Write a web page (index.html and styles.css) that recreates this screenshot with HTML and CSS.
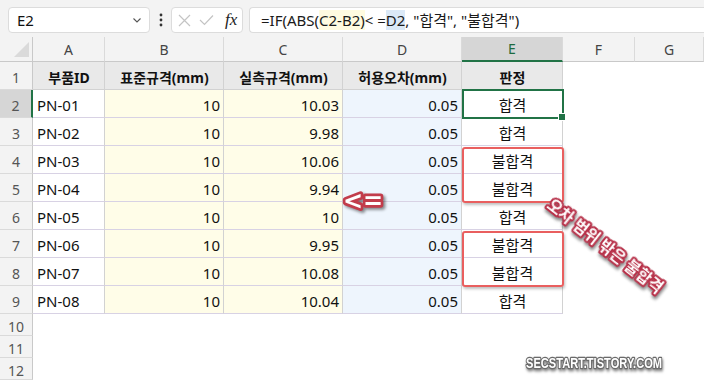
FILE: index.html
```html
<!DOCTYPE html>
<html lang="ko">

<head>
  <meta charset="UTF-8">
  <title>판정 수식</title>
  <link rel="stylesheet" href="styles.css">
</head>

<body>
  <div class="toolbar">
    <div class="namebox">
      <span>E2</span>
      <svg class="chev" width="8" height="5" viewBox="0 0 8 5"><path d="M0.5 0.5 L4 4 L7.5 0.5" fill="none" stroke="#555" stroke-width="1.1"/></svg>
    </div>
    <svg class="dots" width="4" height="14" viewBox="0 0 4 14"><circle cx="2" cy="2" r="1.4" fill="#333"/><circle cx="2" cy="7" r="1.4" fill="#333"/><circle cx="2" cy="12" r="1.4" fill="#333"/></svg>
    <div class="fxbox">
      <svg width="13" height="13" viewBox="0 0 13 13"><path d="M1 1 L12 12 M12 1 L1 12" stroke="#c4c4c4" stroke-width="1.2"/></svg>
      <svg width="15" height="12" viewBox="0 0 15 12"><path d="M1 6 L5.5 10.5 L14 1.5" fill="none" stroke="#c4c4c4" stroke-width="1.2"/></svg>
      <i class="fx">fx</i>
    </div>
    <div class="formula">=IF(ABS(<span class="ref-y">C2-B2)</span>&lt; =<span class="ref-b">D2</span>, "합격", "불합격")</div>
  </div>

  <div class="sheet">
    <div class="grid">
      <div class="corner"><span class="tri"></span></div>
      <div class="colhead">A</div>
      <div class="colhead">B</div>
      <div class="colhead">C</div>
      <div class="colhead">D</div>
      <div class="colhead sel">E</div>
      <div class="colhead">F</div>
      <div class="colhead">G</div>

      <div class="rowhead">1</div>
      <div class="cell th">부품ID</div>
      <div class="cell th">표준규격(mm)</div>
      <div class="cell th">실측규격(mm)</div>
      <div class="cell th">허용오차(mm)</div>
      <div class="cell th">판정</div>
      <div class="blank"></div>
      <div class="blank"></div>

      <div class="rowhead sel">2</div>
      <div class="cell a">PN-01</div>
      <div class="cell b">10</div>
      <div class="cell c">10.03</div>
      <div class="cell d">0.05</div>
      <div class="cell e">합격</div>
      <div class="blank"></div>
      <div class="blank"></div>

      <div class="rowhead">3</div>
      <div class="cell a">PN-02</div>
      <div class="cell b">10</div>
      <div class="cell c">9.98</div>
      <div class="cell d">0.05</div>
      <div class="cell e">합격</div>
      <div class="blank"></div>
      <div class="blank"></div>

      <div class="rowhead">4</div>
      <div class="cell a">PN-03</div>
      <div class="cell b">10</div>
      <div class="cell c">10.06</div>
      <div class="cell d">0.05</div>
      <div class="cell e">불합격</div>
      <div class="blank"></div>
      <div class="blank"></div>

      <div class="rowhead">5</div>
      <div class="cell a">PN-04</div>
      <div class="cell b">10</div>
      <div class="cell c">9.94</div>
      <div class="cell d">0.05</div>
      <div class="cell e">불합격</div>
      <div class="blank"></div>
      <div class="blank"></div>

      <div class="rowhead">6</div>
      <div class="cell a">PN-05</div>
      <div class="cell b">10</div>
      <div class="cell c">10</div>
      <div class="cell d">0.05</div>
      <div class="cell e">합격</div>
      <div class="blank"></div>
      <div class="blank"></div>

      <div class="rowhead">7</div>
      <div class="cell a">PN-06</div>
      <div class="cell b">10</div>
      <div class="cell c">9.95</div>
      <div class="cell d">0.05</div>
      <div class="cell e">불합격</div>
      <div class="blank"></div>
      <div class="blank"></div>

      <div class="rowhead">8</div>
      <div class="cell a">PN-07</div>
      <div class="cell b">10</div>
      <div class="cell c">10.08</div>
      <div class="cell d">0.05</div>
      <div class="cell e">불합격</div>
      <div class="blank"></div>
      <div class="blank"></div>

      <div class="rowhead">9</div>
      <div class="cell a">PN-08</div>
      <div class="cell b">10</div>
      <div class="cell c">10.04</div>
      <div class="cell d">0.05</div>
      <div class="cell e">합격</div>
      <div class="blank"></div>
      <div class="blank"></div>

      <div class="rowhead">10</div>
      <div class="empty"></div>
      <div class="rowhead">11</div>
      <div class="empty"></div>
      <div class="rowhead">12</div>
      <div class="empty"></div>
    </div>

    <!-- 선택 셀과 강조 표시 -->
    <div class="active-cell"><span class="handle"></span></div>
    <div class="redbox box1"></div>
    <div class="redbox box2"></div>

    <svg class="notes" width="704" height="343" viewBox="0 0 704 343">
      <text class="arrow" x="343" y="172">&lt;=</text>
      <text class="label" transform="translate(606 208) rotate(38)" text-anchor="middle" dominant-baseline="central">오차 범위 밖은 불합격</text>
      <text class="mark" transform="translate(526 331) scale(0.74 1)">SECSTART.TISTORY.COM</text>
    </svg>
  </div>
</body>

</html>
```

FILE: styles.css
```css
body {
  margin: 0;
  width: 704px;
  height: 380px;
  overflow: hidden;
  background: #fff;
  font-family: "Noto Sans", "Noto Sans CJK KR", sans-serif;
  color: #111;
}

/* 수식 입력줄 */
.toolbar {
  display: flex;
  align-items: flex-start;
  height: 37px;
  padding: 7px 0 0 8px;
  box-sizing: border-box;
  background: #f3f3f3;
}

.namebox {
  display: flex;
  align-items: center;
  justify-content: space-between;
  width: 142px;
  height: 26px;
  padding: 0 8px 0 8px;
  box-sizing: border-box;
  background: #fff;
  border: 1px solid #dcdcdc;
  border-radius: 4px;
  font-size: 15px;
}

.dots {
  margin: 6px 8px 0 9px;
}

.fxbox {
  display: flex;
  align-items: center;
  gap: 8px;
  width: 72px;
  height: 26px;
  padding-left: 6px;
  box-sizing: border-box;
  background: #fff;
  border: 1px solid #dcdcdc;
  border-radius: 4px;
}

.fx {
  margin-left: 3px;
  font-family: "Liberation Serif", serif;
  font-size: 17px;
  color: #222;
}

.formula {
  flex: 1;
  height: 26px;
  margin-left: 6px;
  padding-left: 11px;
  box-sizing: border-box;
  background: #fff;
  border: 1px solid #dcdcdc;
  border-right: none;
  border-radius: 4px 0 0 4px;
  font-size: 15px;
  line-height: 24px;
  white-space: pre;
  color: #1a1a1a;
}

.ref-y {
  background: #fffbe0;
}

.ref-b {
  background: #dbe9f7;
}

/* 시트 */
.sheet {
  position: relative;
}

.grid {
  display: grid;
  grid-template-columns: 33px 72px 119px 119px 119px 101px 72px 69px;
  grid-template-rows: 25px repeat(9, 28px) repeat(3, 22px);
}

.grid > div {
  box-sizing: border-box;
}

.corner {
  position: relative;
  background: #f3f3f3;
  border-right: 1px solid #c9c9c9;
  border-bottom: 1px solid #c9c9c9;
}

.tri {
  position: absolute;
  right: 3px;
  bottom: 4px;
  width: 0;
  height: 0;
  border-left: 15px solid transparent;
  border-bottom: 15px solid #dadada;
}

.colhead {
  display: flex;
  align-items: center;
  justify-content: center;
  background: #f3f3f3;
  border-right: 1px solid #dadada;
  border-bottom: 1px solid #c9c9c9;
  font-size: 14px;
  color: #444;
}

.colhead.sel {
  background: #d6d6d6;
  color: #1d6b3f;
  border-bottom: 2px solid #217346;
}

.rowhead {
  display: flex;
  align-items: center;
  justify-content: center;
  padding-top: 3px;
  background: #f3f3f3;
  border-right: 1px solid #c9c9c9;
  border-bottom: 1px solid #dadada;
  font-size: 14px;
  color: #555;
}

.rowhead.sel {
  background: #d6d6d6;
  border-right: 2px solid #217346;
}

.cell {
  display: flex;
  align-items: center;
  padding: 2px 3px 0 4px;
  border-right: 1px solid #d2d2d2;
  border-bottom: 1px solid #d8d2e4;
  font-size: 15px;
  white-space: nowrap;
}

.th {
  justify-content: center;
  background: #e9e9e9;
  font-weight: bold;
  font-size: 14px;
  border-bottom-color: #d2d2d2;
}

.a {
  background: #fff;
}

.b,
.c {
  justify-content: flex-end;
  background: #fffde8;
}

.d {
  justify-content: flex-end;
  background: #eef5fd;
}

.e {
  justify-content: center;
  background: #fff;
}

.blank {
  background: #fff;
}

.empty {
  grid-column: 2 / 9;
  background: #fff;
}

/* 겹쳐 그리는 표시 */
.active-cell {
  position: absolute;
  left: 462px;
  top: 52px;
  width: 102px;
  height: 30px;
  box-sizing: border-box;
  border: 2px solid #217346;
}

.handle {
  position: absolute;
  right: -4px;
  bottom: -4px;
  width: 6px;
  height: 6px;
  background: #217346;
  border: 1px solid #fff;
}

.redbox {
  position: absolute;
  left: 462px;
  width: 102px;
  height: 56px;
  box-sizing: border-box;
  border: 2px solid #e95f5f;
  border-radius: 3px;
  box-shadow: 1px 2px 3px rgba(0, 0, 0, 0.25);
}

.box1 {
  top: 110px;
}

.box2 {
  top: 194px;
}

.notes {
  position: absolute;
  left: 0;
  top: 0;
  pointer-events: none;
}

.notes text {
  fill: #fff;
  paint-order: stroke;
  stroke-linejoin: round;
  font-weight: bold;
}

.arrow {
  font-family: "DejaVu Sans", sans-serif;
  font-size: 24px;
  stroke: #c23c4b;
  stroke-width: 5.5px;
  filter: drop-shadow(2px 2px 1.5px rgba(0, 0, 0, 0.45));
}

.label {
  font-family: "Noto Sans CJK KR", sans-serif;
  font-size: 15.5px;
  font-weight: 900;
  stroke: #b8324a;
  stroke-width: 4px;
  filter: drop-shadow(2px 2px 1.5px rgba(0, 0, 0, 0.45));
}

.mark {
  font-family: "Liberation Sans", sans-serif;
  font-size: 15px;
  stroke: #6a6a6a;
  stroke-width: 2.5px;
  filter: drop-shadow(1px 2px 1.5px rgba(0, 0, 0, 0.5));
}
```
